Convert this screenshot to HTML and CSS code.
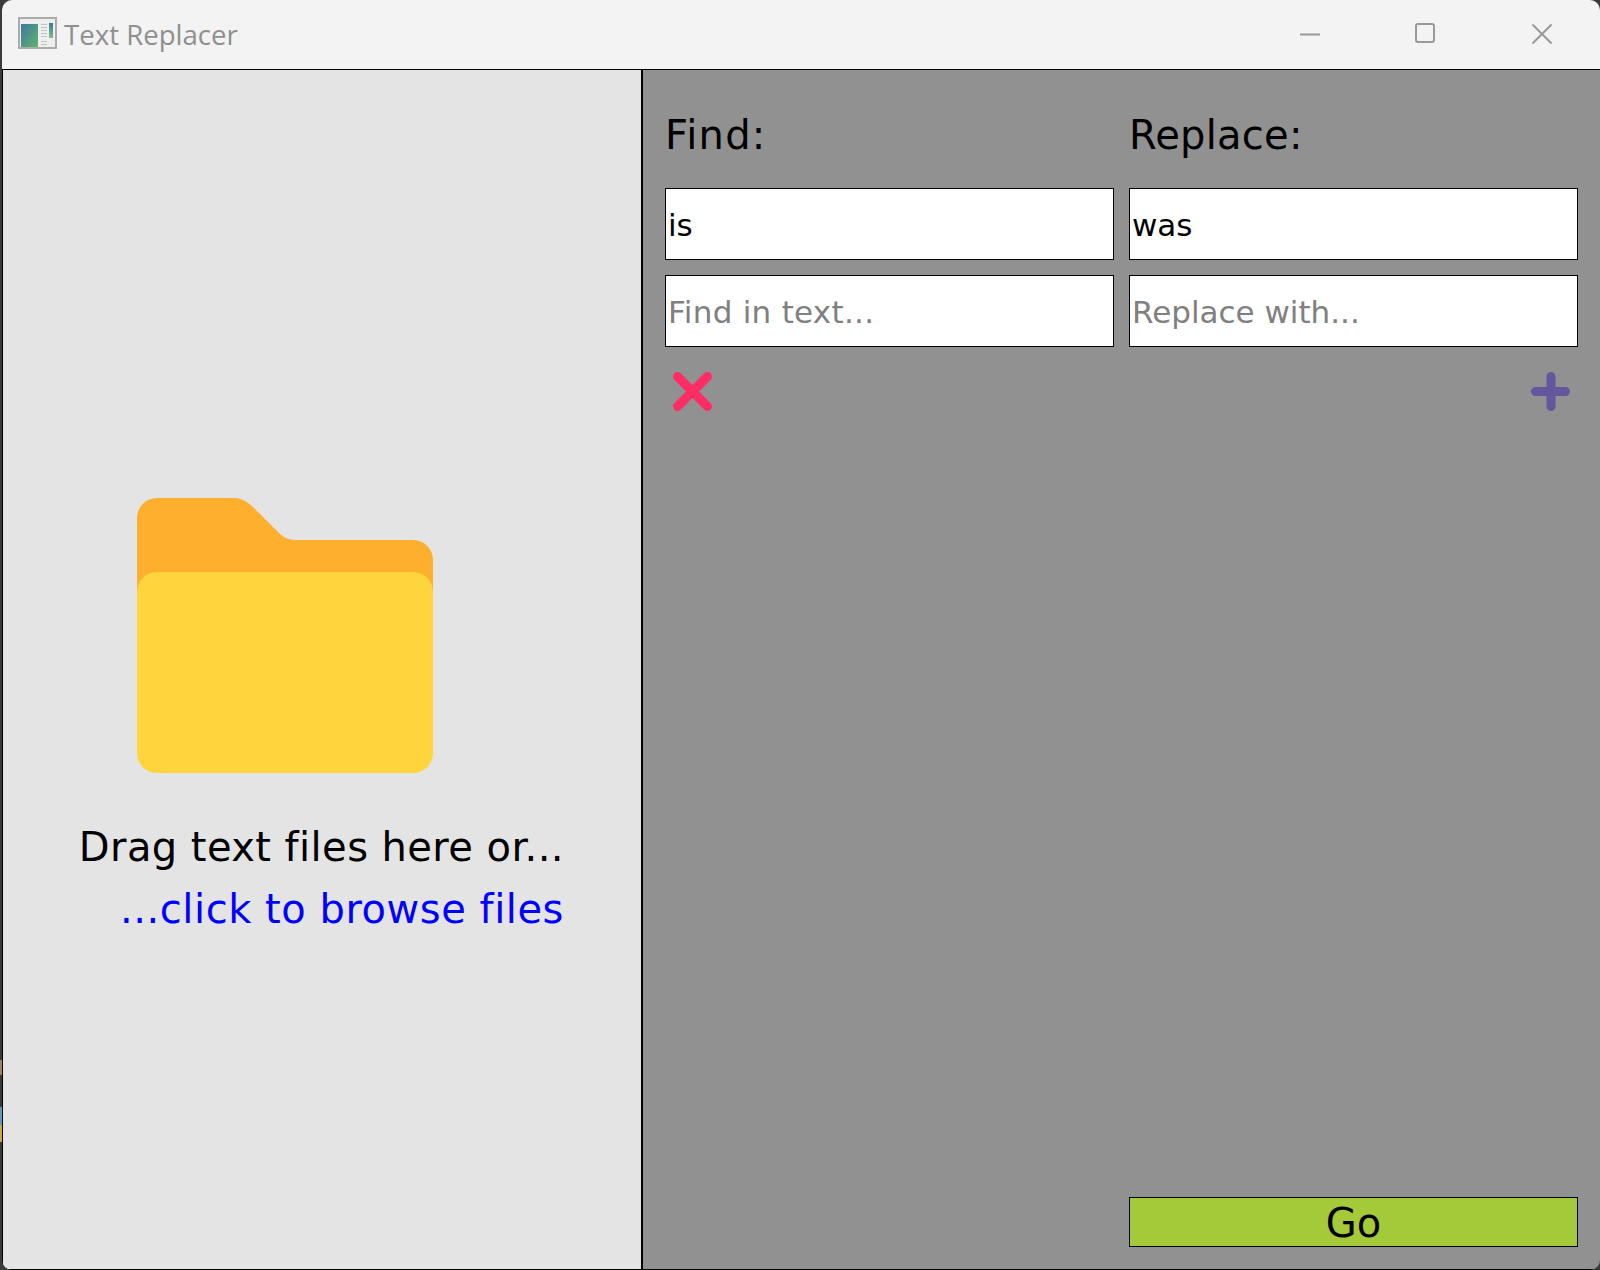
FILE: index.html
```html
<!DOCTYPE html>
<html lang="en">
<head>
  <meta charset="UTF-8">
  <title>Text Replacer</title>
  <link rel="stylesheet" href="styles.css">
</head>
<body>
  <div class="window">
    <header class="titlebar">
      <svg class="app-icon" viewBox="0 0 39 32" width="39" height="32">
        <defs>
          <linearGradient id="page" x1="0" y1="0" x2="1" y2="1">
            <stop offset="0" stop-color="#3f78a0"/>
            <stop offset="1" stop-color="#5cb56c"/>
          </linearGradient>
          <linearGradient id="column" x1="0" y1="0" x2="0" y2="1">
            <stop offset="0" stop-color="#2f7f8c"/>
            <stop offset="1" stop-color="#7cc08a"/>
          </linearGradient>
        </defs>
        <rect x="1" y="1" width="37" height="30" fill="#eeeeee" stroke="#ababab" stroke-width="2"/>
        <rect x="3" y="7" width="17" height="23" fill="url(#page)"/>
        <path d="M23 7.500h6M23 10.500h6M23 13.500h6M23 16.500h6M23 19.500h6M23 24.500h6M23 27.500h6" stroke="#c4c4c4" stroke-width="1"/>
        <rect x="31" y="6" width="4" height="15" fill="url(#column)"/>
      </svg>
      <span class="app-title">Text Replacer</span>
      <div class="win-buttons">
        <svg viewBox="0 0 20 20" width="20" height="20"><path d="M0 10.500h20" class="win-stroke"/></svg>
        <svg class="win-max" viewBox="0 0 20 20" width="20" height="20"><rect x="1" y="1" width="18" height="18" rx="2" class="win-stroke"/></svg>
        <svg viewBox="0 0 20 20" width="20" height="20"><path d="M0.500 0.500l19 19M19.500 0.500l-19 19" class="win-stroke"/></svg>
      </div>
    </header>

    <main class="content">
      <section class="drop-pane">
        <svg class="folder" viewBox="0 0 296 275" width="296" height="275">
          <path d="M20 0H97C106 0 112 5 118 11L142 35C146 39 151 42 158 42H276A20 20 0 0 1 296 62V110H0V20A20 20 0 0 1 20 0Z" fill="#ffaf2e"/>
          <rect y="74" width="296" height="201" rx="20" fill="#ffd43d"/>
        </svg>
        <p class="drop-text">Drag text files here or...</p>
        <a class="browse-link">...click to browse files</a>
      </section>

      <section class="replace-pane">
        <div class="field-grid">
          <label class="field-label label-find">Find:</label>
          <label class="field-label label-replace">Replace:</label>
          <input class="field" type="text" value="is">
          <input class="field" type="text" value="was">
          <input class="field field-find" type="text" placeholder="Find in text...">
          <input class="field" type="text" placeholder="Replace with...">
        </div>
        <div class="row-actions">
          <svg viewBox="0 0 40 40" width="40" height="40"><path d="M4.500 4.500L34.500 34.500M34.500 4.500L4.500 34.500" class="remove-icon"/></svg>
          <svg viewBox="0 0 40 40" width="40" height="40"><path d="M21 4.500V34.500M5.500 19.500H35.500" class="add-icon"/></svg>
        </div>
        <div class="go-row">
          <button class="go-button">Go</button>
        </div>
      </section>
    </main>
  </div>
</body>
</html>
```

FILE: styles.css
```css
html, body {
  height: 100%;
  margin: 0;
}
body {
  background: linear-gradient(to bottom, #3a3a3a 1060px, #a08660 1060px, #a08660 1075px, #3a3a3a 1075px, #3a3a3a 1107px, #5f9bb8 1107px, #5f9bb8 1125px, #c9a93a 1125px, #c9a93a 1142px, #3a3a3a 1142px);
  font-family: "DejaVu Sans", sans-serif;
  overflow: hidden;
}
.window {
  box-sizing: border-box;
  height: 100vh;
  margin-left: 2px;
  display: flex;
  flex-direction: column;
  border-radius: 10px;
  overflow: hidden;
}
.titlebar {
  box-sizing: border-box;
  height: 70px;
  flex: none;
  display: flex;
  align-items: center;
  padding: 0 48px 2px 16px;
  background: #f3f3f3;
  border-bottom: 1px solid #000;
}
.app-icon {
  margin-right: 7px;
  margin-top: -2px;
}
.app-title {
  font-family: "Open Sans", sans-serif;
  font-size: 27.6px;
  color: #8f8f8f;
  padding-top: 1px;
}
.win-buttons {
  margin-left: auto;
  display: flex;
  gap: 96px;
}
.win-max {
  margin: -1px 1px 0 -1px;
}
.win-stroke {
  fill: none;
  stroke: #999;
  stroke-width: 2;
}
.content {
  flex: 1;
  display: flex;
  border-left: 1px solid #000;
  border-bottom: 1px solid #000;
  min-height: 0;
}
.drop-pane {
  box-sizing: border-box;
  width: 640px;
  flex: none;
  background: #e4e4e4;
  border-right: 2px solid #000;
  padding: 428px 77px 0 134px;
  display: flex;
  flex-direction: column;
  align-items: flex-end;
}
.folder {
  align-self: flex-start;
  margin-bottom: 51px;
}
.drop-text {
  margin: 0;
  font-size: 40px;
  line-height: 47px;
  letter-spacing: 0.42px;
  white-space: nowrap;
}
.browse-link {
  margin-top: 15px;
  font-size: 40px;
  line-height: 47px;
  letter-spacing: 0.53px;
  color: #0000ff;
  white-space: nowrap;
}
.replace-pane {
  flex: 1;
  min-width: 0;
  background: #919191;
  padding: 0 22px 22px 22px;
  display: flex;
  flex-direction: column;
}
.field-grid {
  display: grid;
  grid-template-columns: 449px 449px;
  column-gap: 15px;
  row-gap: 15px;
  padding-top: 42px;
}
.field-label {
  font-size: 40px;
  line-height: 47px;
  margin-bottom: 14px;
}
.label-find {
  letter-spacing: 1.2px;
}
.label-replace {
  letter-spacing: 0.25px;
}
.field {
  box-sizing: border-box;
  height: 72px;
  width: 100%;
  border: 1px solid #000;
  border-radius: 0;
  padding: 2px 2px 0;
  background: #fff;
  font-family: "DejaVu Sans", sans-serif;
  font-size: 31px;
  color: #000;
  outline: none;
}
.field::placeholder {
  color: #808080;
  opacity: 1;
}
.field-find {
  letter-spacing: 0.27px;
}
.row-actions {
  display: flex;
  justify-content: space-between;
  padding: 25px 8px 0;
}
.remove-icon {
  fill: none;
  stroke: #ff2d63;
  stroke-width: 9;
  stroke-linecap: round;
}
.add-icon {
  fill: none;
  stroke: #65579e;
  stroke-width: 9;
  stroke-linecap: round;
}
.go-row {
  margin-top: auto;
  display: flex;
  justify-content: flex-end;
}
.go-button {
  box-sizing: border-box;
  width: 449px;
  height: 50px;
  padding: 2px 0 0;
  border: 1px solid #000;
  border-radius: 0;
  background: #a4c939;
  font-family: "DejaVu Sans", sans-serif;
  font-size: 40px;
  line-height: 46px;
  color: #000;
}
```
